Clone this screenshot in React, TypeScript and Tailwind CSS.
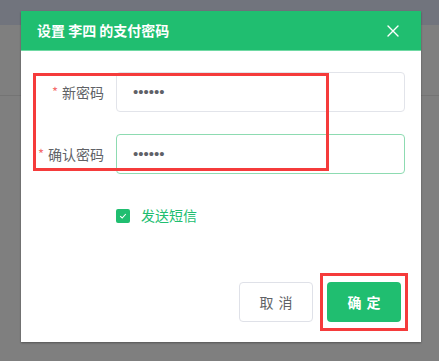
import React from "react";

const font = { fontFamily: '"Noto Sans CJK SC", "Noto Sans", sans-serif' };

function Field({ label, focused }: { label: string; focused?: boolean }) {
  return (
    <div className="flex items-center h-[40px]">
      <div className="w-[83px] flex justify-end items-center text-[14px] text-[#606266]">
        <span className="text-[#f56c6c] mr-[4px] text-[13px]">*</span>
        {label}
      </div>
      <div
        className={
          focused
            ? "ml-[12px] flex-1 h-[40px] rounded-[4px] border border-[#8ddbb1] flex items-center pl-[16px]"
            : "ml-[12px] flex-1 h-[40px] rounded-[4px] border border-[#e2e4ea] flex items-center pl-[16px]"
        }
      >
        <span className="text-[#5f6168] text-[15px]" style={{ fontFamily: '"Liberation Sans", sans-serif' }}>
          ••••••
        </span>
      </div>
    </div>
  );
}

export default function App() {
  return (
    <div className="relative w-[439px] h-[361px] bg-[#7f7f7f] overflow-hidden" style={font}>
      <div className="h-[25px] bg-[#71747d]" />
      <div className="h-[71px] border-b border-[#747474]" />

      <div className="absolute left-[21px] top-[11px] w-[400px] h-[331px] bg-white shadow-[0_1px_2px_rgba(0,0,0,0.35)]">
        <div className="h-[40px] bg-[#20be70] border-b border-[#6fd9a3] flex items-center justify-between pl-[16px] pr-[22px]">
          <span className="text-white font-bold text-[14px]">设置 李四 的支付密码</span>
          <svg width="12" height="12" viewBox="0 0 12 12">
            <path d="M1 1L11 11M11 1L1 11" stroke="white" strokeWidth="1.4" strokeLinecap="round" />
          </svg>
        </div>

        <div className="pr-[16px] pt-[21px]">
          <Field label="新密码" />
          <div className="h-[22px]" />
          <Field label="确认密码" focused />
          <div className="ml-[95px] mt-[31px] flex items-center">
            <span className="w-[14px] h-[14px] rounded-[2px] bg-[#20be70] flex items-center justify-center">
              <svg width="8" height="8" viewBox="0 0 8 8">
                <path d="M1.2 4.2L3.2 6L6.8 2" stroke="white" strokeWidth="1.1" fill="none" />
              </svg>
            </span>
            <span className="ml-[11px] text-[14px] text-[#20be70]">发送短信</span>
          </div>
        </div>

        <div className="flex justify-end gap-[14px] pr-[20px] mt-[56px]">
          <button className="w-[74px] h-[40px] rounded-[4px] border border-[#dfe1e8] bg-white text-[14px] text-[#606266] tracking-[5px] pl-[5px]">
            取消
          </button>
          <button className="w-[74px] h-[40px] rounded-[4px] bg-[#20be70] text-white font-bold text-[14px] tracking-[5px] pl-[5px]">
            确定
          </button>
        </div>

        <div className="absolute left-[12px] top-[62px] w-[296px] h-[98px] border-[3px] border-[#f53b3b]" />
        <div className="absolute left-[299px] top-[262px] w-[88px] h-[58px] border-[3px] border-[#f53b3b]" />
      </div>
    </div>
  );
}
